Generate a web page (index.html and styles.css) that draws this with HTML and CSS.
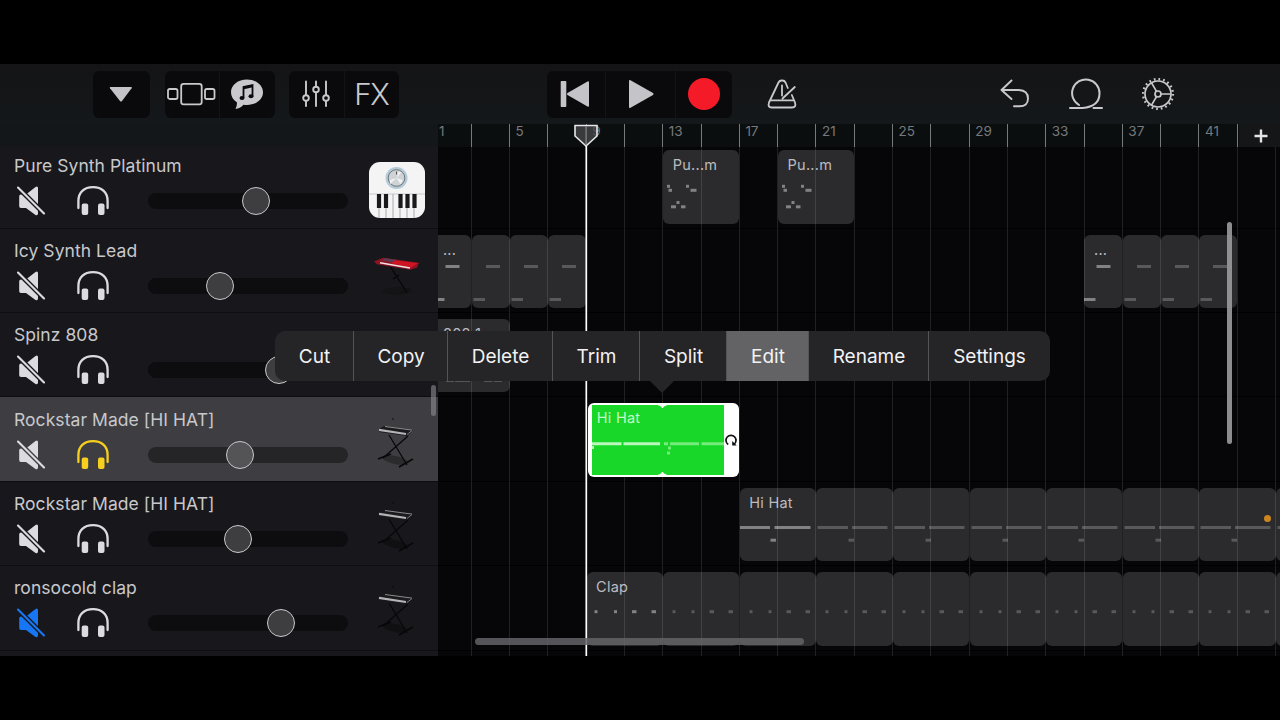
FILE: index.html
```html
<!DOCTYPE html>
<html lang="en">
<head>
    <meta charset="UTF-8">
    <meta name="viewport" content="width=device-width, initial-scale=1.0">
    <title>Tracks</title>
    <link rel="stylesheet" href="styles.css">
</head>
<body>
    <!-- Shared icons -->
    <svg class="defs" width="0" height="0">
        <symbol id="i-mute" viewBox="0 0 30 30">
            <path d="M4 8.500h5L18.500 1q2.300-1.400 2.500 1v25.500q-.2 2.600-2.500 1.400L9 22H4q-1.800 0-1.800-1.800v-9.900Q2.200 8.500 4 8.500z" fill="currentColor"/>
            <path class="mute-gap" d="M-1 -.5L29 29.500" stroke-width="4.800"/>
            <path d="M1 1.500L27 27.500" stroke="currentColor" stroke-width="2.100" stroke-linecap="round"/>
        </symbol>
        <symbol id="i-phones" viewBox="0 0 32 30">
            <path d="M1.400 22V15C1.400 6.500 7 1.200 16 1.200S30.600 6.500 30.600 15v7" fill="none" stroke="currentColor" stroke-width="2.300" stroke-linecap="round"/>
            <rect x="4.700" y="17.500" width="6.500" height="11.500" rx="2" fill="currentColor"/>
            <rect x="21" y="17.500" width="6.500" height="11.500" rx="2" fill="currentColor"/>
        </symbol>
        <symbol id="i-stand" viewBox="0 0 56 56">
            <ellipse cx="26" cy="44" rx="13" ry="4" fill="#000" opacity=".3" transform="rotate(12 26 44)"/>
            <path d="M20 19L38 49M39 20L14 42" stroke="#08080a" stroke-width="1.300" fill="none"/>
            <path d="M9 43l13-5M30 51l14-8" stroke="#08080a" stroke-width="1.700" fill="none"/>
            <path d="M10 13l5-3 29 4-6 6-28-4z" fill="#1b1b1d"/>
            <path d="M16 10.500l27 3.600" stroke="#8b8b8f" stroke-width="1"/>
            <path d="M10 13.800l27 4.200" stroke="#b4b4b8" stroke-width="2.200"/>
            <path d="M38 18.500l5-4" stroke="#77777b" stroke-width="1"/>
            <circle cx="24" cy="3" r=".8" fill="#08080a"/>
        </symbol>
        <symbol id="i-red" viewBox="0 0 56 56">
            <ellipse cx="28" cy="44" rx="15" ry="4" fill="#000" opacity=".15"/>
            <path d="M21 19L38 46M30 28L24 32" stroke="#060608" stroke-width="1.200"/>
            <path d="M31 46l10-5" stroke="#0e0e11" stroke-width="1"/>
            <path d="M5 14.500l9-3.700 36 5-2 5-7 2-33-5.500z" fill="#8e1424"/>
            <path d="M16 11.300l11 1.500-3 2.500-11-1.800z" fill="#5a3c55"/>
            <path d="M26 13.300l23 3-7 4.500-20-4.500z" fill="#cf1422"/>
            <path d="M11 15.800l30 5.200" stroke="#f0e2e2" stroke-width="1.400"/>
        </symbol>
    </svg>

    <div class="app">
        <div class="toolbar">
            <div class="group browser">
                <button><svg width="26" height="18"><path d="M2.500 2h20.500q1.500 0 .6 1.300L14 16q-1 1-2 0L2 3.300Q1.200 2 2.500 2z" fill="#c4c4c8"/></svg></button>
            </div>
            <div class="group views">
                <button><svg width="50" height="26" fill="none" stroke="#c9c9cd" stroke-width="1.800"><rect x="2" y="8" width="9.500" height="10" rx="1.800"/><rect x="15.200" y="2.800" width="20.500" height="20.500" rx="2.400"/><rect x="39" y="8" width="9.500" height="10" rx="1.800"/></svg></button>
                <button><svg width="34" height="32"><path d="M17 1.500c9 0 16 5.600 16 12.700S26 27 17 27q-1.800 0-3.500-.3Q10 30.500 5.500 31q1.500-3 1.500-6.500Q1 20.500 1 14.200C1 7 8 1.500 17 1.500z" fill="#c9c9cd"/><path d="M13.500 20V9l9-2v11" fill="none" stroke="#0b0b0d" stroke-width="1.800"/><path d="M13.500 10l9-2" stroke="#0b0b0d" stroke-width="2.600"/><ellipse cx="12" cy="20" rx="2.500" ry="2" fill="#0b0b0d"/><ellipse cx="21" cy="18.200" rx="2.500" ry="2" fill="#0b0b0d"/></svg></button>
            </div>
            <div class="group mix">
                <button><svg width="30" height="28" fill="none" stroke="#c9c9cd" stroke-width="1.900" stroke-linecap="round"><path d="M5 1.500v13.500M5 21v5M15 1.500v5M15 12.500V26M25 1.500v13.500M25 21v5"/><circle cx="5" cy="18" r="2.800"/><circle cx="15" cy="9.500" r="2.800"/><circle cx="25" cy="18" r="2.800"/></svg></button>
                <button class="fx">FX</button>
            </div>
            <div class="group transport">
                <button class="rewind"><svg width="30" height="28"><path d="M1.500 1h4q.8 0 .8.800v24.400q0 .8-.8.800h-4q-.8 0-.8-.800V1.800q0-.8.800-.8zM27.500 1.500q1.500-.7 1.500 1v23q0 1.700-1.500 1L7.500 15q-1.200-1 0-2z" fill="#c4c4c8"/></svg></button>
                <button class="play"><svg width="28" height="30"><path d="M2 2q0-1.600 1.500-.8L26 14q1.300 1 0 2L3.500 28.800Q2 29.600 2 28z" fill="#c4c4c8"/></svg></button>
                <button class="record"><span></span></button>
            </div>
            <svg class="metronome" width="32" height="32" fill="none" stroke="#c9c9cd" stroke-width="1.800" stroke-linecap="round" stroke-linejoin="round"><path d="M21.800 10L19.500 4.500Q18.500 2.500 16.500 2.500H15.500Q13.500 2.500 12.500 4.500L3 24.500Q1.500 29.500 5.500 29.500H26Q30.500 29.500 29 24.500L25.800 17M4 22.300H28M16 7.500v10M16.500 20.500L28.800 9"/></svg>
            <svg class="undo" width="30" height="30" fill="none" stroke="#c9c9cd" stroke-width="1.900" stroke-linecap="round" stroke-linejoin="round"><path d="M11.500 1.500L1.500 11l10 9M2 11H19Q28 11.500 28 19.500T19 27.200H14"/></svg>
            <svg class="loop" width="36" height="32" fill="none" stroke="#c9c9cd" stroke-width="2" stroke-linecap="round"><path d="M2 30H14.500Q31.500 28.500 31.500 15.500A13.700 13.700 0 1 0 11 27M25.500 30H34"/></svg>
            <svg class="gear" width="34" height="34" fill="none" stroke="#c9c9cd" stroke-width="1.700"><circle cx="17" cy="17" r="13"/><circle cx="17" cy="17" r="14.900" stroke-width="2.400" stroke-dasharray="1.700 2.981"/><circle cx="17" cy="17" r="3"/><path d="M20 17h9.700M15.500 14.400l-5.100-8.800M15.500 19.600l-5.100 8.800"/></svg>
        </div>

        <div class="ruler-row">
            <div class="ruler-left"></div>
            <div class="ruler" id="ruler"></div>
            <button class="add"><svg width="16" height="16"><path d="M8 1.500v13M1.500 8h13" stroke="#e4e4e8" stroke-width="2.400"/></svg></button>
        </div>

        <div class="main">
            <div class="tracks" id="tracks"></div>
            <div class="timeline">
                <div class="lanes" id="lanes"></div>
                <div class="gridlines" id="gridlines"></div>
            </div>
        </div>

        <!-- Things floating above the arrangement -->
        <svg class="playhead" width="26" height="532"><path d="M2 1.500H24V12L13 22 2 12z" fill="#4a4a4c" fill-opacity=".75" stroke="#e8e8ea" stroke-width="1.600"/><path d="M13 2v18" stroke="#8a8a8c"/><path d="M13.300 22v510" stroke="#fff" stroke-width="1.700"/></svg>
        <div class="thumb thumb-tracks"></div>
        <div class="thumb thumb-y"></div>
        <div class="thumb thumb-x"></div>
        <div class="warn-dot"></div>

        <div class="menu">
            <button class="cut">Cut</button>
            <button class="copy">Copy</button>
            <button class="delete">Delete</button>
            <button class="trim">Trim</button>
            <button class="split">Split</button>
            <button class="edit">Edit</button>
            <button class="rename">Rename</button>
            <button class="settings">Settings</button>
        </div>
    </div>

    <script>
        const tracks = [
            { name: 'Pure Synth Platinum', vol: 107.5, icon: 'synth' },
            { name: 'Icy Synth Lead', vol: 71.5, icon: 'red' },
            { name: 'Spinz 808', vol: 131, icon: '' },
            { name: 'Rockstar Made [HI HAT]', vol: 92, icon: 'stand', selected: true, solo: true },
            { name: 'Rockstar Made [HI HAT]', vol: 89.5, icon: 'stand' },
            { name: 'ronsocold clap', vol: 132.5, icon: 'stand', muted: true },
            { name: '', vol: 0, icon: '' }
        ];

        // note = [x, y, width]
        const pure = [[4,34.8,3],[5.5,38.8,3.5],[23,34.8,3],[27.500,38.8,6],[8,55.3,5],[13.500,51,3],[18,55.3,4.5]];
        const icyFirst = [[12.5,30,14],[0,63,11.5]];
        const icy = [[14,30,14],[1.5,63,11.500]];
        const bass = [[13,59.5,8],[22,59.5,15],[51,59.5,8.500],[61,59.5,8]];
        const hat = [[0,38,30],[34.5,38,36],[30.500,50.7,5.500]];
        const hatNext = [[1.5,38,30.500],[36,38,35.500],[32.5,50.7,5.500]];
        const clap = [[7.5,38.2,3],[27,38.2,3],[45,38.2,4.500],[64.5,38.2,4.500]];
        const clapNext = [[9.5,38.2,3],[28.5,38.2,3],[46.500,38.2,4.500],[65.5,38.2,4.500]];

        // region = [start column, span, label, notes]
        const lanes = [
            [[7, 2, 'Pu...m', pure], [10, 2, 'Pu...m', pure]],
            [[1, 1, '...', icyFirst], [2, 1, '', icy], [3, 1, '', icy], [4, 1, '', icy],
             [18, 1, '...', icyFirst], [19, 1, '', icy], [20, 1, '', icy], [21, 1, '', icy]],
            [[1, 2, '808 1', bass]],
            [],
            [[9, 2, 'Hi Hat', hat]],
            [[5, 2, 'Clap', clap]],
            []
        ];
        for (let c = 11; c <= 23; c += 2) lanes[4].push([c, 2, '', hatNext]);
        for (let c = 7; c <= 23; c += 2) lanes[5].push([c, 2, '', clapNext]);

        const synthIcon = `
            <svg class="inst" viewBox="0 0 56 56">
                <rect width="56" height="56" rx="11" fill="#f4f4f5"/>
                <path d="M0 32h56" stroke="#c9c9cc" stroke-width="1"/>
                <circle cx="27.500" cy="16" r="11" fill="#b4cad6"/>
                <circle cx="27.500" cy="16" r="8.300" fill="#d0d3d5" stroke="#6d767b" stroke-width="1"/>
                <path d="M27.500 16L21 18v4zM27.500 16l6 2-2 4zM27.500 16l5-6h-3z" fill="#f2f3f4"/>
                <path d="M27.500 9.500v3" stroke="#555"/>
                <path d="M10 46v10M17 46v10M24 32v24M31 46v10M38 46v10M45 46v10" stroke="#aaaaad"/>
                <path d="M10 32v14M17 32v14M31.500 32v14M38.500 32v14M45.500 32v14" stroke="#19191b" stroke-width="4.200"/>
            </svg>`;

        function instrument(icon) {
            if (icon === 'synth') return synthIcon;
            if (!icon) return '<span class="inst"></span>';
            return `<svg class="inst"><use href="#i-${icon}"/></svg>`;
        }

        document.getElementById('tracks').innerHTML = tracks.map(t => `
            <div class="track ${t.selected ? 'selected' : ''}">
                <div class="track-body">
                    <div class="track-name">${t.name}</div>
                    <div class="controls">
                        <svg class="mute ${t.muted ? 'on' : ''}"><use href="#i-mute"/></svg>
                        <svg class="solo ${t.solo ? 'on' : ''}"><use href="#i-phones"/></svg>
                        <div class="slider"><span class="knob" style="margin-left: ${t.vol - 14}px"></span></div>
                    </div>
                </div>
                ${instrument(t.icon)}
            </div>`).join('');

        function region([start, span, label, notes]) {
            const first = label ? 'first' : '';
            const rects = notes.map(n => `<rect x="${n[0]}" y="${n[1]}" width="${n[2]}" height="3"/>`).join('');
            return `<div class="region ${first}" style="grid-column: ${start} / span ${span}">
                <span class="label ${label === '...' ? 'dots' : ''}">${label}</span><svg class="notes">${rects}</svg></div>`;
        }

        // The selected, looped region
        const active = `
            <div class="region active">
                <div class="green"><span class="label">Hi Hat</span>
                    <svg class="notes" width="132" height="70">
                        <path d="M65.500 0h10q-3.500 1-5 3.300Q69 1 65.500 0zM65.500 70h10q-3.500-1-5-3.300Q69 69 65.500 70z" fill="#fff"/>
                        <path d="M0 38.800H29.500M31.500 38.800H68M0 42.500h2" stroke="#b9f7bd" stroke-width="3"/>
                        <path d="M72 38.800h4M78 38.800H107M109.500 38.800H132M76 43h3M75 48h3" stroke="#74ec7b" stroke-width="3"/>
                    </svg>
                </div>
                <svg class="loop-handle" width="14" height="14" fill="none" stroke="#111" stroke-width="1.700"><path d="M4.200 11.500A5 5 0 1 1 9.800 11.500"/><path d="M8.200 8v4.500h4.500z" fill="#111" stroke="none"/></svg>
            </div>`;

        document.getElementById('lanes').innerHTML = lanes.map((l, i) =>
            `<div class="lane">${i === 3 ? active : l.map(region).join('')}</div>`).join('');

        let bars = '';
        let lines = '';
        for (let i = 0; i < 23; i++) {
            if (i < 22) bars += `<span class="bar">${i % 2 === 0 ? i * 2 + 1 : ''}</span>`;
            lines += '<span></span>';
        }
        document.getElementById('ruler').innerHTML = bars;
        document.getElementById('gridlines').innerHTML = lines;
    </script>
</body>
</html>
```

FILE: styles.css
```css
* {
    box-sizing: border-box;
}
body {
    margin: 0;
    width: 1280px;
    height: 720px;
    padding: 64px 0;
    background: #000;
    font-family: Inter, "Liberation Sans", sans-serif;
    overflow: hidden;
}
button {
    border: none;
    padding: 0;
    margin: 0;
    background: none;
    color: inherit;
    font-family: inherit;
}
svg {
    display: block;
    flex-shrink: 0;
}
.defs {
    position: absolute;
}
.app {
    position: relative;
    width: 1280px;
    height: 592px;
    overflow: hidden;
    display: flex;
    flex-direction: column;
    background: #060608;
}

/* Toolbar */
.toolbar {
    display: flex;
    align-items: center;
    height: 60px;
    flex-shrink: 0;
    padding-left: 93px;
    background: linear-gradient(#141416, #14181a);
}
.group {
    display: flex;
    height: 47px;
    border-radius: 6px;
    background: #0a0a0c;
    overflow: hidden;
}
.group button {
    flex: 1;
    display: flex;
    align-items: center;
    justify-content: center;
    padding-right: 1px;
}
.group button + button {
    border-left: 1px solid #141417;
}
.browser { width: 57px; margin-right: 14.500px; }
.views { width: 110px; margin-right: 14.500px; }
.mix { width: 110px; margin-right: 148px; }
.transport { width: 185px; }
.group .fx {
    color: #c9c9cd;
    font-size: 29.500px;
    font-weight: 300;
    letter-spacing: -1.500px;
}
.group .rewind { flex: 0 0 58px; padding-right: 3px; }
.group .play { flex: 0 0 70px; padding-right: 0; }
.record span {
    width: 32px;
    height: 32px;
    border-radius: 50%;
    background: #f51a27;
}
.metronome { margin-left: 34px; }
.undo { margin-left: 202px; }
.loop { margin-left: 38px; }
.gear { margin-left: 37px; }

/* Ruler */
.ruler-row {
    display: flex;
    height: 23px;
    flex-shrink: 0;
    background: #0a0e0f;
}
.ruler-left {
    width: 438px;
    background: #141719;
}
.ruler {
    flex: 1;
    display: flex;
    overflow: hidden;
}
.bar {
    flex: 0 0 38.300px;
    border-left: 1.500px solid #77797b;
    padding-left: 5.500px;
    color: #77797b;
    font-size: 13.500px;
    line-height: 14px;
}
.bar:first-child {
    margin-left: -5.500px;
}
.add {
    display: flex;
    width: 41px;
    justify-content: center;
    align-items: center;
    padding-left: 2px;
    background: #151618;
}

/* Track headers */
.main {
    display: flex;
    flex: 1;
    min-height: 0;
    overflow: hidden;
}
.tracks {
    width: 438px;
    margin-top: -2.800px;
    flex-shrink: 0;
}
.track {
    --row: #18181c;
    display: flex;
    height: 84.400px;
    padding: 13.200px 13px 0 14px;
    border-bottom: 1.500px solid #0e0e11;
    background: var(--row);
}
.track.selected {
    --row: #3e3e42;
}
.track-body {
    flex: 1;
}
.track-name {
    height: 18px;
    line-height: 18px;
    font-size: 17.500px;
    letter-spacing: 0.060px;
    color: #c8c8cc;
    white-space: nowrap;
}
.controls {
    display: flex;
    align-items: center;
    height: 30px;
    margin-top: 11px;
    color: #dcdce0;
}
.mute {
    width: 30px;
    height: 30px;
    margin: 0 33px 0 3px;
}
.mute-gap {
    stroke: var(--row);
}
.mute.on {
    color: #1676f3;
}
.solo {
    width: 32px;
    height: 30px;
    margin: 0 39px 0 -3px;
}
.solo.on {
    color: #f6cf1f;
}
.slider {
    display: flex;
    align-items: center;
    width: 200px;
    height: 16px;
    border-radius: 8px;
    background: #0d0d10;
}
.selected .slider {
    background: #252528;
}
.knob {
    width: 28px;
    height: 28px;
    border-radius: 50%;
    border: 1.500px solid #c9c9cd;
    background: #3e3e40;
}
.selected .knob {
    background: #545457;
}
.inst {
    width: 56px;
    height: 56px;
    margin-top: 5px;
}

/* Timeline */
.timeline {
    position: relative;
    flex: 1;
    overflow: hidden;
}
.lanes {
    margin: -2.800px 0 0 -4.600px;
}
.lane {
    display: grid;
    grid-template-columns: repeat(24, 38.300px);
    height: 84.400px;
    padding-top: 6px;
    border-bottom: 1.500px solid #000;
}
.region {
    position: relative;
    height: 73.500px;
    margin-right: 0.400px;
    border-radius: 6px;
    background: #2b2b2d;
    overflow: hidden;
    color: #bcbcc0;
}
.label {
    position: absolute;
    left: 9.500px;
    top: 6px;
    font-size: 14.500px;
    line-height: 18px;
    letter-spacing: 0.250px;
    white-space: nowrap;
}
.label.dots {
    top: 6px;
}
.notes {
    width: 100%;
    height: 100%;
    fill: #59595b;
}
.first .notes {
    fill: #828285;
}
.gridlines {
    position: absolute;
    display: flex;
    top: 0;
    bottom: 0;
    left: -5.500px;
    pointer-events: none;
}
.gridlines span {
    flex: 0 0 38.300px;
    border-left: 1.500px solid rgba(255, 255, 255, 0.11);
}
.active {
    grid-column: 5 / span 4;
    display: flex;
    align-items: center;
    margin-left: 1.200px;
    padding-left: 4px;
    background: #fff;
    z-index: 1;
}
.active .green {
    width: 132px;
    height: 70px;
    background: #18d728;
    color: #c3f9c6;
}
.active .label {
    left: 9px;
}
.loop-handle {
    margin-left: 0.500px;
}

/* Overlays */
.playhead {
    position: absolute;
    left: 573px;
    top: 60px;
}
.thumb {
    position: absolute;
    border-radius: 4px;
}
.thumb-tracks {
    left: 431px;
    top: 321px;
    width: 4.500px;
    height: 31px;
    background: rgba(140, 140, 145, 0.6);
}
.thumb-y {
    left: 1227px;
    top: 158px;
    width: 5px;
    height: 222px;
    background: rgba(155, 155, 158, 0.9);
}
.thumb-x {
    left: 475px;
    top: 574px;
    width: 329px;
    height: 7px;
    background: rgba(100, 100, 103, 0.85);
}
.warn-dot {
    position: absolute;
    left: 1264px;
    top: 451px;
    width: 7px;
    height: 7px;
    border-radius: 50%;
    background: #cb8622;
}

/* Context menu */
.menu {
    position: absolute;
    left: 275px;
    top: 267px;
    display: flex;
    height: 50px;
    border-radius: 10px;
    background: #252427;
    color: #f2f2f4;
}
.menu::after {
    content: "";
    position: absolute;
    left: 375px;
    top: 50px;
    border: 12.500px solid transparent;
    border-top: 12px solid #252427;
    border-bottom: none;
}
.menu button {
    font-size: 19px;
    padding-left: 1px;
    border-right: 1px solid #545357;
}
.menu .cut { width: 79px; }
.menu .copy { width: 94px; }
.menu .delete { width: 105px; }
.menu .trim { width: 87px; }
.menu .split { width: 87px; }
.menu .edit { width: 82px; background: #636265; }
.menu .rename { width: 120px; }
.menu .settings { width: 121px; padding-left: 0; border-right: none; }
```
